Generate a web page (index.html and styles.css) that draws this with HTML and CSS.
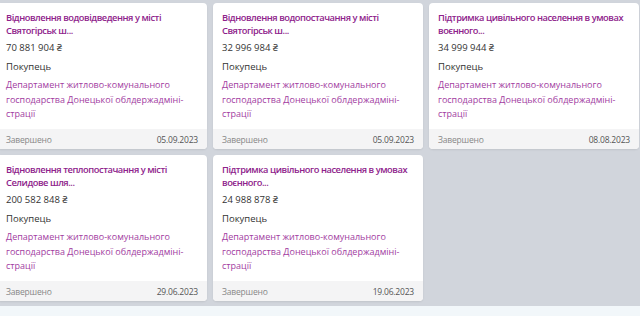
FILE: index.html
```html
<!DOCTYPE html>
<html lang="uk">
<head>
  <meta charset="UTF-8" />
  <meta name="viewport" content="width=device-width, initial-scale=1.0" />
  <title>Тендери</title>
  <link rel="stylesheet" href="styles.css">
</head>
<body>
  <main class="board">
    <div class="grid">
      <div class="card">
        <div class="card-body">
          <h3 class="card-title">Відновлення водовідведення у місті Святогірськ ш...</h3>
          <div class="price">70 881 904 ₴</div>
          <div class="role">Покупець</div>
          <div class="buyer">Департамент житлово-комунального господарства Донецької облдержадміні&shy;страції</div>
        </div>
        <div class="card-foot"><span>Завершено</span><span class="date">05.09.2023</span></div>
      </div>
      <div class="card">
        <div class="card-body">
          <h3 class="card-title">Відновлення водопостачання у місті Святогірськ ш...</h3>
          <div class="price">32 996 984 ₴</div>
          <div class="role">Покупець</div>
          <div class="buyer">Департамент житлово-комунального господарства Донецької облдержадміні&shy;страції</div>
        </div>
        <div class="card-foot"><span>Завершено</span><span class="date">05.09.2023</span></div>
      </div>
      <div class="card">
        <div class="card-body">
          <h3 class="card-title">Підтримка цивільного населення в умовах воєнного...</h3>
          <div class="price">34 999 944 ₴</div>
          <div class="role">Покупець</div>
          <div class="buyer">Департамент житлово-комунального господарства Донецької облдержадміні&shy;страції</div>
        </div>
        <div class="card-foot"><span>Завершено</span><span class="date">08.08.2023</span></div>
      </div>
      <div class="card">
        <div class="card-body">
          <h3 class="card-title">Відновлення теплопостачання у місті Селидове шля...</h3>
          <div class="price">200 582 848 ₴</div>
          <div class="role">Покупець</div>
          <div class="buyer">Департамент житлово-комунального господарства Донецької облдержадміні&shy;страції</div>
        </div>
        <div class="card-foot"><span>Завершено</span><span class="date">29.06.2023</span></div>
      </div>
      <div class="card">
        <div class="card-body">
          <h3 class="card-title">Підтримка цивільного населення в умовах воєнного...</h3>
          <div class="price">24 988 878 ₴</div>
          <div class="role">Покупець</div>
          <div class="buyer">Департамент житлово-комунального господарства Донецької облдержадміні&shy;страції</div>
        </div>
        <div class="card-foot"><span>Завершено</span><span class="date">19.06.2023</span></div>
      </div>
    </div>
  </main>
  <footer class="strip"></footer>
</body>
</html>
```

FILE: styles.css
```css
body {
  margin: 0;
  font-family: "Open Sans", "Noto Sans", sans-serif;
  background-color: #f2f7fa;
  color: #333;
  overflow: hidden;
}

.board {
  background-color: #d1d5dc;
  height: 306px;
  overflow: hidden;
}

.grid {
  display: grid;
  grid-template-columns: repeat(3, 210px);
  gap: 6px;
  margin-left: -3px;
  padding-top: 3px;
}

.card {
  background-color: #fff;
  border-radius: 4px;
  overflow: hidden;
  display: flex;
  flex-direction: column;
  height: 146px;
  box-shadow: 0 1px 2px rgba(0, 0, 0, 0.08);
}

.card-body {
  flex: 1;
  padding: 8px 7px 0 9px;
}

.card-title {
  margin: 0;
  font-size: 9.3px;
  line-height: 13px;
  font-weight: 600;
  letter-spacing: -0.45px;
  color: #8e228b;
}

.price {
  margin-top: 4px;
  font-size: 9.5px;
  line-height: 14px;
}

.role {
  margin-top: 5px;
  font-size: 9.5px;
  line-height: 14px;
}

.buyer {
  margin-top: 4px;
  font-size: 9px;
  line-height: 14.5px;
  color: #a23c9f;
  hyphens: manual;
}

.card-foot {
  height: 20px;
  padding: 0 9px;
  background-color: #f4f4f5;
  display: flex;
  justify-content: space-between;
  align-items: center;
  font-size: 8.5px;
  letter-spacing: -0.2px;
  color: #888;
}

.card-foot .date {
  color: #555;
}

.strip {
  height: 10px;
}
```
